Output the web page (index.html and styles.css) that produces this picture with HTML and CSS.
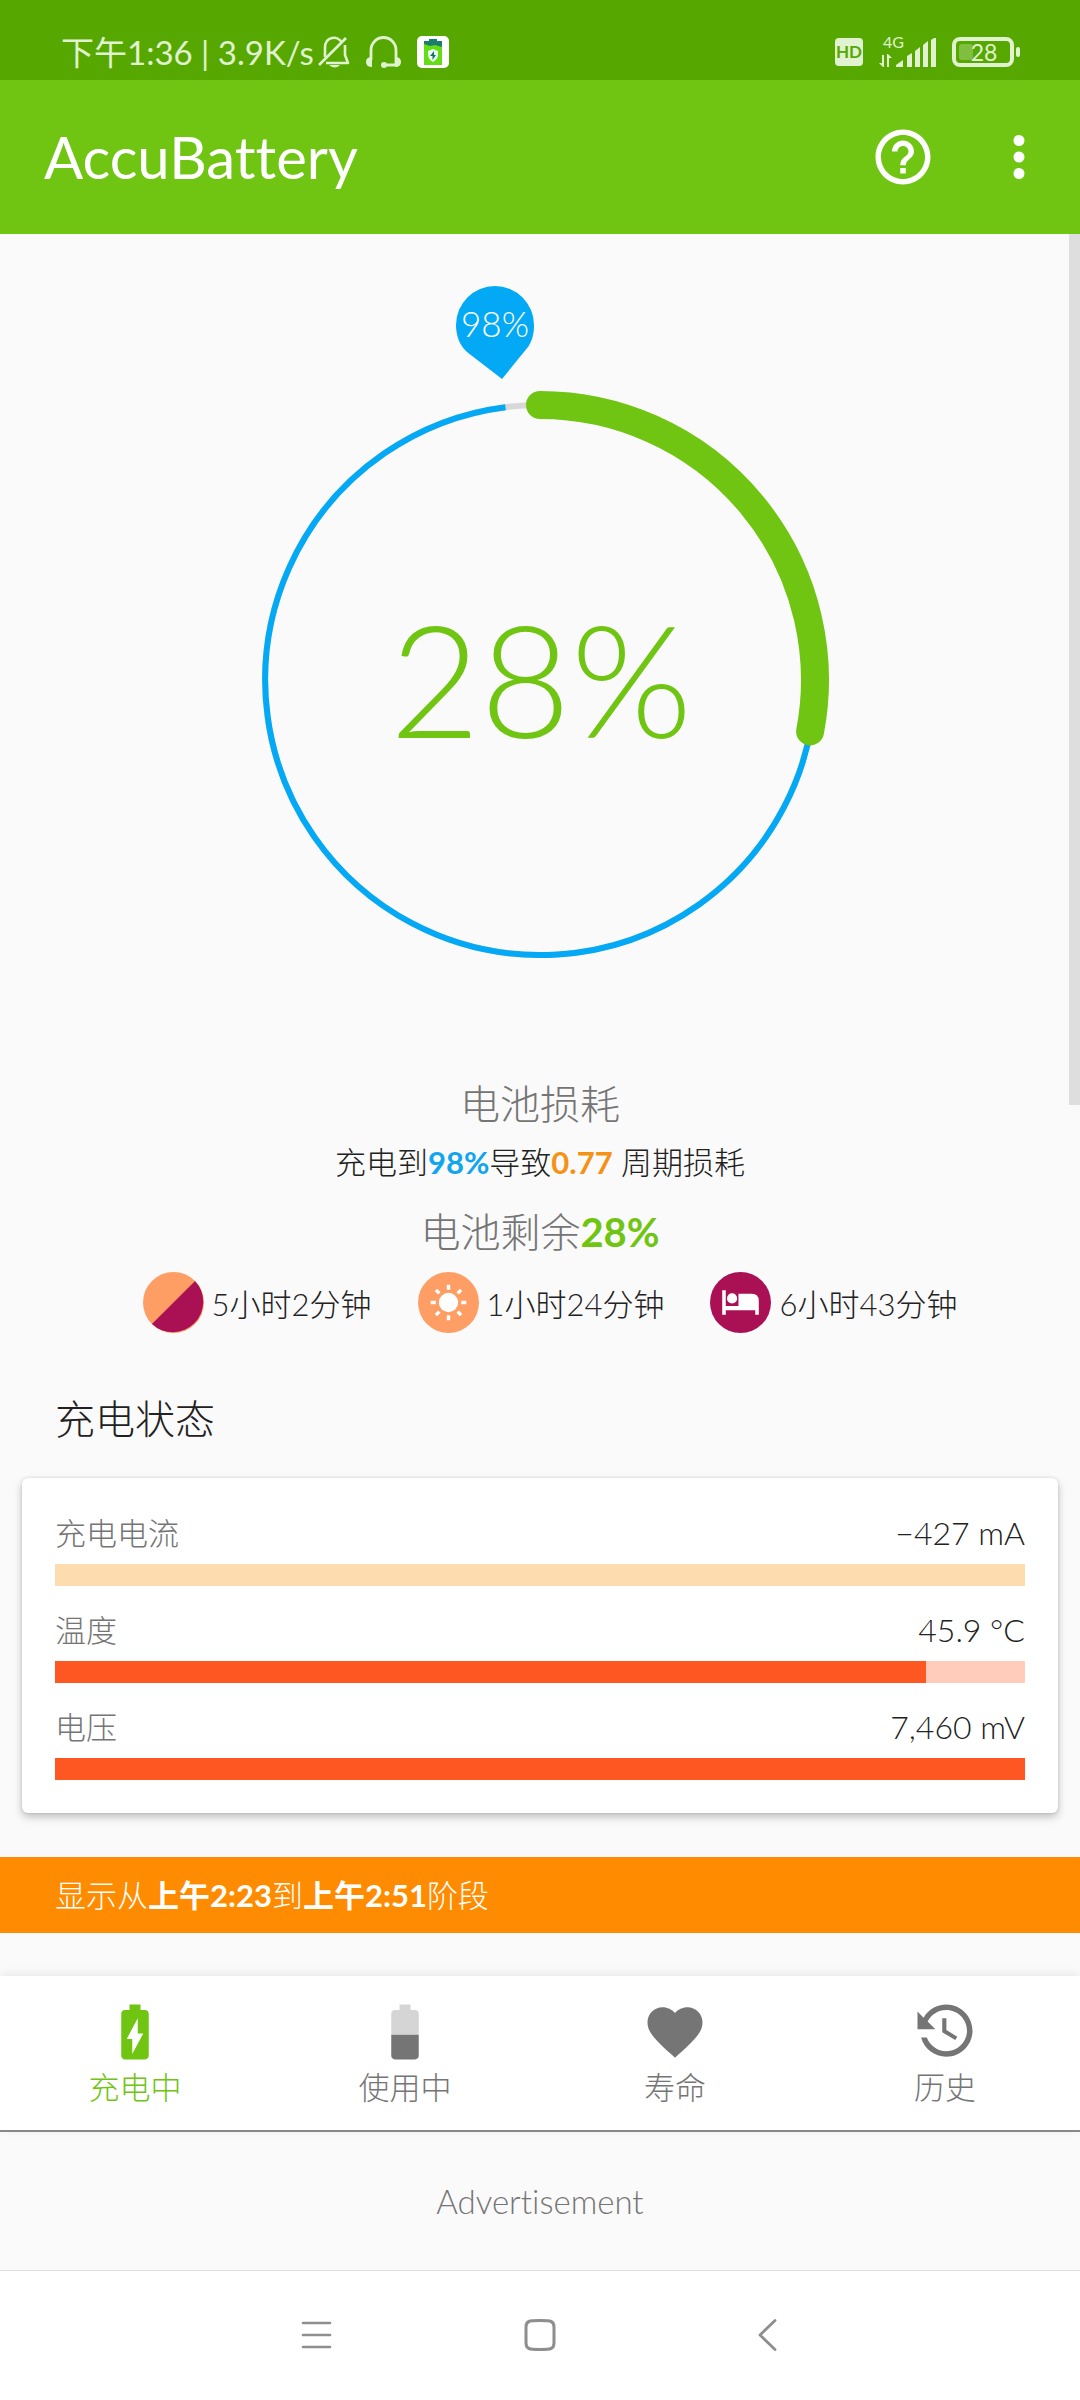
FILE: index.html
```html
<!DOCTYPE html>
<html lang="zh-CN">
<head>
<meta charset="utf-8">
<meta name="viewport" content="width=device-width, initial-scale=1">
<title>AccuBattery</title>
<link rel="stylesheet" href="styles.css">
</head>
<body>
<div class="status-bar">
  <span class="status-time">下午1:36 | 3.9K/s</span>
  <div class="status-left">
    <svg width="32" height="32" viewBox="0 0 32 32" aria-hidden="true">
      <g fill="none" stroke="currentColor" stroke-width="2.6" stroke-linejoin="round"><path d="M24 7C20-1 7 0 7 12v9M27 9v10l3 8H8"/><path d="M1 29 28 2"/></g>
      <path d="M11 29h11q-5 5-11 0z" fill="currentColor"/>
    </svg>
    <svg width="35" height="32" viewBox="0 0 35 32" aria-hidden="true">
      <path d="M5 24V14a12.500 12.500 0 0 1 25 0v15H18" fill="none" stroke="currentColor" stroke-width="2.800"/>
      <path d="M6 21v10q-6 0-6-5t6-5zM29 21v10q6 0 6-5t-6-5z" fill="currentColor"/><circle cx="18" cy="29" r="3" fill="currentColor"/>
    </svg>
    <svg class="app-badge" width="32" height="32" viewBox="0 0 32 32" aria-hidden="true">
      <rect width="32" height="32" rx="5" fill="#fff"/><path d="M7 5h5V3h8v2h5v24H7z" fill="#64dd17"/><path d="M7 5h5V3h8v2h5v6l-7-2-5 1-6-2z" fill="#1b7d6b"/><path d="m16 13 5 2v4c0 3-2 5-5 7-3-2-5-4-5-7v-4z" fill="#eafff0"/><path d="m17 15-4 5h2.500v4l3.500-5h-2z" fill="#14746a"/>
    </svg>
  </div>
  <div class="status-right">
    <svg width="28" height="28" viewBox="0 0 28 28" aria-hidden="true">
      <rect width="28" height="28" rx="4" fill="currentColor"/>
      <text class="hd-text" x="14" y="20" text-anchor="middle">HD</text>
    </svg>
    <svg width="57" height="40" viewBox="0 -4 57 40" aria-hidden="true">
      <text class="net-text" x="4" y="12">4G</text>
      <g fill="currentColor"><path d="M3 19h2v12H4l-4-4h3zM8 31V18h1l4 4h-3v9z"/><path d="M17 31v-2l7-5v7zM28 31V20l5-3v14zM36 31V15l5-4v20zM44 31V9l5-4v26zM52 31V4l3-2h2v29z"/></g>
    </svg>
    <svg width="68" height="31" viewBox="0 0 68 31" aria-hidden="true">
      <rect x="2" y="2" width="58" height="26" rx="6" fill="none" stroke="currentColor" stroke-width="4"/>
      <rect x="7" y="7" width="14" height="16" rx="3" fill="currentColor" opacity=".3"/><rect x="64" y="10" width="4" height="10" rx="2" fill="currentColor"/>
      <text class="batt-text" x="32" y="24" text-anchor="middle">28</text>
    </svg>
  </div>
</div>

<header class="app-bar">
  <h1 class="app-title">AccuBattery</h1>
  <button class="icon-button" type="button" aria-label="帮助">
    <svg width="66" height="66" viewBox="0 0 24 24" fill="currentColor"><path d="M11 18h2v-2h-2v2zm1-16C6.480 2 2 6.480 2 12s4.480 10 10 10 10-4.480 10-10S17.520 2 12 2zm0 18c-4.410 0-8-3.590-8-8s3.590-8 8-8 8 3.590 8 8-3.590 8-8 8zm0-14c-2.210 0-4 1.790-4 4h2c0-1.100.9-2 2-2s2 .9 2 2c0 2-3 1.750-3 5h2c0-2.250 3-2.500 3-5 0-2.210-1.790-4-4-4z"/></svg>
  </button>
  <button class="icon-button" type="button" aria-label="更多">
    <svg width="66" height="66" viewBox="0 0 24 24" fill="currentColor"><circle cx="12" cy="6" r="2"/><circle cx="12" cy="12" r="2"/><circle cx="12" cy="18" r="2"/></svg>
  </button>
</header>

<main class="content">
  <div class="scroll-thumb"></div>
  <svg class="gauge" viewBox="250 274 580 696" role="img" aria-label="28%">
    <g fill="none">
      <circle cx="540" cy="680" r="275" stroke="#d8d8d8" stroke-width="6"/>
      <path d="M540 405A275 275 0 1 1 505.500 407.200" stroke="#03a9f4" stroke-width="6"/>
      <path d="M540 405A275 275 0 0 1 810.100 731.500" stroke="#70c412" stroke-width="28" stroke-linecap="round"/>
    </g>
    <path d="M502 379 467 352C460 346 456 336 456 325a39 39 0 0 1 78 0c0 9-2 16-6 22z" fill="#03a9f4"/>
    <text class="pin-text" x="495" y="337" text-anchor="middle">98%</text>
    <text class="gauge-text" x="541" y="738" text-anchor="middle">28%</text>
  </svg>

  <section class="summary">
    <h2 class="summary-title">电池损耗</h2>
    <p class="wear">充电到<b class="blue">98%</b>导致<b class="orange">0.77</b> 周期损耗</p>
    <p class="remaining">电池剩余<b class="green">28%</b></p>
    <ul class="estimates">
      <li class="estimate">
        <svg width="61" height="61" viewBox="0 0 60 60" aria-hidden="true"><circle cx="30" cy="30" r="30" fill="#ff9e64"/><path d="M51.200 8.800A30 30 0 0 1 8.800 51.200z" fill="#aa1155"/></svg>
        <span>5小时2分钟</span>
      </li>
      <li class="estimate">
        <svg width="61" height="61" viewBox="0 0 60 60" aria-hidden="true"><circle cx="30" cy="30" r="30" fill="#ff9e64"/><circle cx="30" cy="30" r="9.500" fill="#fff"/><path d="M30 12.500v5M30 42.500v5M12.500 30h5M42.500 30h5M17.600 17.600l3.400 3.400M39 39l3.400 3.400M17.600 42.400 21 39M39 21l3.400-3.400" stroke="#fff" stroke-width="3.400"/></svg>
        <span>1小时24分钟</span>
      </li>
      <li class="estimate">
        <svg width="61" height="61" viewBox="0 0 60 60" aria-hidden="true"><circle cx="30" cy="30" r="30" fill="#aa1155"/><path d="M12 18h3.500v15.500H28V21.500h13q7 0 7 7V42h-3.500v-4.500h-29V42H12z" fill="#fff"/><circle cx="21.700" cy="26" r="5" fill="#fff"/></svg>
        <span>6小时43分钟</span>
      </li>
    </ul>
  </section>

  <h2 class="section-title">充电状态</h2>
  <section class="card">
    <div class="metric">
      <div class="metric-head"><span class="metric-label">充电电流</span><span class="metric-value">−427 mA</span></div>
      <div class="bar bar-current"></div>
    </div>
    <div class="metric">
      <div class="metric-head"><span class="metric-label">温度</span><span class="metric-value">45.9 °C</span></div>
      <div class="bar bar-hot"><div class="bar-fill" style="width: 89.8%"></div></div>
    </div>
    <div class="metric">
      <div class="metric-head"><span class="metric-label">电压</span><span class="metric-value">7,460 mV</span></div>
      <div class="bar bar-hot"><div class="bar-fill" style="width: 100%"></div></div>
    </div>
  </section>

  <p class="banner">显示从<b>上午2:23</b>到<b>上午2:51</b>阶段</p>
</main>

<nav class="tabs">
  <a class="tab tab-active" href="#charging">
    <svg width="66" height="66" viewBox="0 0 24 24" fill="currentColor"><path d="M15.670 4H14V2h-4v2H8.330C7.600 4 7 4.600 7 5.330v15.330C7 21.400 7.600 22 8.330 22h7.330c.74 0 1.340-.6 1.340-1.330V5.330C17 4.600 16.400 4 15.670 4zM11 20v-5.500H9L13 7v5.500h2L11 20z"/></svg>
    <span>充电中</span>
  </a>
  <a class="tab" href="#discharging">
    <svg width="66" height="66" viewBox="0 0 24 24" fill="currentColor"><path fill-opacity=".3" d="M17 5.330C17 4.600 16.400 4 15.670 4H14V2h-4v2H8.330C7.600 4 7 4.600 7 5.330V13h10V5.330z"/><path d="M7 13v7.670C7 21.400 7.600 22 8.330 22h7.330c.74 0 1.340-.6 1.340-1.330V13H7z"/></svg>
    <span>使用中</span>
  </a>
  <a class="tab" href="#health">
    <svg width="66" height="66" viewBox="0 0 24 24" fill="currentColor"><path d="m12 21.350-1.450-1.320C5.400 15.360 2 12.280 2 8.500 2 5.420 4.420 3 7.500 3c1.740 0 3.410.81 4.500 2.090C13.090 3.810 14.760 3 16.500 3 19.580 3 22 5.420 22 8.500c0 3.780-3.400 6.860-8.550 11.540L12 21.350z"/></svg>
    <span>寿命</span>
  </a>
  <a class="tab" href="#history">
    <svg width="66" height="66" viewBox="0 0 24 24" fill="currentColor"><path d="M12.500 2C9 2 5.900 3.900 4.200 6.800L2 4.500V11h6.500L5.700 8.200C7 5.700 9.500 4 12.500 4c4.100 0 7.500 3.400 7.500 7.500S16.600 19 12.500 19c-3.300 0-6-2.100-7.100-5H3.300c1.100 4 4.800 7 9.200 7 5.300 0 9.500-4.300 9.500-9.500S17.700 2 12.500 2zM11 7v5.100l4.700 2.800.8-1.200-4-2.400V7H11z"/></svg>
    <span>历史</span>
  </a>
</nav>

<aside class="ad">Advertisement</aside>

<div class="system-nav">
  <button class="sys-button" type="button" aria-label="菜单"><svg width="34" height="34" viewBox="0 0 34 34" fill="none" stroke="currentColor" stroke-width="2.600" stroke-linecap="round"><path d="M5 5h27M5 17h27M5 29h27"/></svg></button>
  <button class="sys-button" type="button" aria-label="主页"><svg width="34" height="34" viewBox="0 0 34 34" fill="none" stroke="currentColor" stroke-width="3"><path d="M17 2.500C28 2.500 31 3 31 9v16c0 6-3 6.500-14 6.500S3 31 3 25V9c0-6 3-6.500 14-6.500z"/></svg></button>
  <button class="sys-button" type="button" aria-label="返回"><svg width="34" height="34" viewBox="0 0 34 34" fill="none" stroke="currentColor" stroke-width="2.800" stroke-linecap="round" stroke-linejoin="round"><path d="M27 2.500 12 17l15 14.500"/></svg></button>
</div>
</body>
</html>
```
FILE: styles.css
```css
* {
  box-sizing: border-box;
  margin: 0;
  padding: 0;
}

body {
  display: flex;
  flex-direction: column;
  min-height: 100vh;
  background: #fafafa;
  color: #212121;
  font-family: Lato, "Noto Sans CJK SC", sans-serif;
  font-size: 31px;
  font-weight: 300;
  font-variant-ligatures: none;
}

svg {
  display: block;
  flex: none;
}

b {
  font-weight: 700;
}

button {
  border: 0;
  background: none;
  color: inherit;
  font: inherit;
}

/* Status bar */

.status-bar {
  display: flex;
  align-items: center;
  height: 80px;
  padding: 24px 60px 0 61px;
  background: #56a800;
  color: #e0f2cf;
}

.status-time {
  font-size: 33px;
  font-weight: 400;
  line-height: 40px;
  white-space: nowrap;
}

.status-left {
  display: flex;
  flex: 1;
  gap: 16px;
  margin-left: 4px;
}

.status-right {
  display: flex;
  align-items: center;
  gap: 16px;
}

.hd-text {
  fill: #56a800;
  font-size: 17px;
  font-weight: 700;
}

.net-text {
  fill: currentColor;
  font-size: 16px;
  font-weight: 400;
}

.batt-text {
  fill: currentColor;
  font-size: 23px;
  font-weight: 400;
}

/* App bar */

.app-bar {
  display: flex;
  align-items: center;
  gap: 50px;
  height: 154px;
  padding: 0 28px 0 44px;
  background: #70c412;
  color: #fff;
}

.app-title {
  flex: 1;
  font-size: 58px;
  font-weight: 400;
  line-height: 64px;
}

/* Scrolling content */

.content {
  position: relative;
  flex: 1;
  padding: 40px 0 43px;
}

.scroll-thumb {
  position: absolute;
  top: 0;
  right: 0;
  width: 11px;
  height: 50%;
  background: #dedede;
}

.gauge {
  width: 580px;
  max-width: 100%;
  margin: 0 auto 106px;
}

.pin-text {
  fill: #fff;
  font-size: 35px;
}

.gauge-text {
  fill: #70c412;
  font-size: 156px;
  font-weight: 300;
}

.summary {
  text-align: center;
}

.summary-title,
.remaining {
  color: #757575;
  font-size: 40px;
  font-weight: 300;
}

.summary-title {
  line-height: 56px;
}

.wear {
  line-height: 60px;
}

.remaining {
  line-height: 80px;
}

.blue {
  color: #11a5ee;
}

.orange {
  color: #f59115;
}

.green {
  color: #70c412;
}

.estimates {
  display: flex;
  justify-content: center;
  gap: 46px;
  padding-left: 20px;
  list-style: none;
}

.estimate {
  display: flex;
  align-items: center;
  gap: 8px;
  white-space: nowrap;
}

.section-title {
  margin: 56px 55px 29px;
  font-size: 40px;
  font-weight: 300;
  line-height: 60px;
}

.card {
  display: flex;
  flex-direction: column;
  gap: 22px;
  margin: 0 22px;
  padding: 33px;
  border-radius: 6px;
  background: #fff;
  box-shadow: 0 4px 8px rgba(0, 0, 0, 0.24), 0 0 3px rgba(0, 0, 0, 0.12);
}

.metric-head {
  display: flex;
  justify-content: space-between;
  margin-bottom: 9px;
  line-height: 44px;
}

.metric-label {
  color: #757575;
}

.metric-value {
  font-size: 32px;
}

.bar {
  height: 22px;
}

.bar-current {
  background: #fddcb0;
}

.bar-hot {
  background: #ffccbc;
}

.bar-fill {
  height: 100%;
  background: #ff5722;
}

.banner {
  margin-top: 44px;
  padding: 0 55px;
  background: #ff8c00;
  color: #fff;
  line-height: 76px;
}

/* Bottom tabs */

.tabs {
  position: relative;
  display: grid;
  grid-template-columns: repeat(4, 1fr);
  padding: 23px 0 21px;
  border-bottom: 2px solid #888;
  background: #fff;
  box-shadow: 0 -2px 10px rgba(0, 0, 0, 0.08);
}

.tab {
  display: flex;
  flex-direction: column;
  align-items: center;
  color: #757575;
  line-height: 44px;
  text-decoration: none;
}

.tab-active {
  color: #70c412;
}

.ad {
  color: #757575;
  font-size: 33px;
  line-height: 138px;
  text-align: center;
}

.system-nav {
  display: flex;
  align-items: center;
  justify-content: center;
  gap: 159px;
  height: 130px;
  padding-bottom: 2px;
  border-top: 1px solid #e0e0e0;
  background: #fff;
  color: #8e8e8e;
}

.sys-button {
  display: flex;
  justify-content: center;
  width: 66px;
  padding: 16px;
}
```
